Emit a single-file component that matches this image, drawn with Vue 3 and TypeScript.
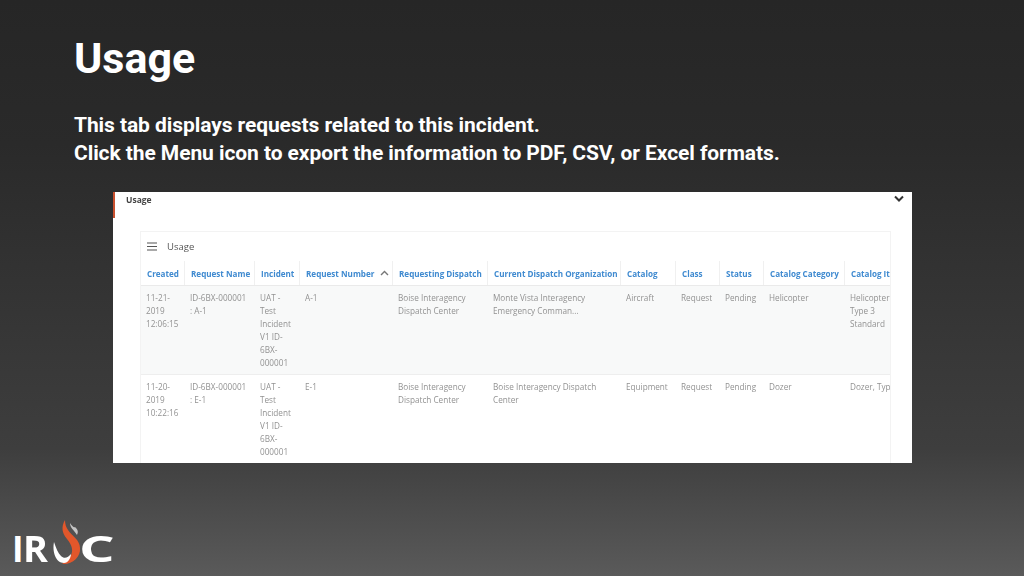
<script setup lang="ts">
interface Row { cells: string[] }
const columns = [
  { label: 'Created', width: 44 }, { label: 'Request Name', width: 70 }, { label: 'Incident', width: 45 },
  { label: 'Request Number', width: 93, sorted: true }, { label: 'Requesting Dispatch', width: 95 },
  { label: 'Current Dispatch Organization', width: 133 }, { label: 'Catalog', width: 55 }, { label: 'Class', width: 44 },
  { label: 'Status', width: 44 }, { label: 'Catalog Category', width: 81 }, { label: 'Catalog Item', width: 46 }
]
const rows: Row[] = [
  { cells: ['11-21-2019 12:06:15', 'ID-6BX-000001 :\u00a0A-1', 'UAT - Test Incident V1 ID-6BX-000001', 'A-1', 'Boise Interagency Dispatch Center', 'Monte Vista Interagency Emergency Comman...', 'Aircraft', 'Request', 'Pending', 'Helicopter', 'Helicopter Type 3 Standard'] },
  { cells: ['11-20-2019 10:22:16', 'ID-6BX-000001 :\u00a0E-1', 'UAT - Test Incident V1 ID-6BX-000001', 'E-1', 'Boise Interagency Dispatch Center', 'Boise Interagency Dispatch Center', 'Equipment', 'Request', 'Pending', 'Dozer', 'Dozer,\u00a0Type'] }
]
const gridColumns = columns.map((c) => `${c.width}px`).join(' ')
</script>

<template>
  <div class="slide">
    <h1 class="title">Usage</h1>
    <p class="intro">This tab displays requests related to this incident.<br />Click the Menu icon to export the information to PDF, CSV, or Excel formats.</p>
    <div class="shot">
      <div class="shot-head">
        <span class="shot-title">Usage</span>
        <svg class="chev" width="12" height="8" viewBox="0 0 12 8"><path d="M2 1.5 6 5.5 10 1.5" fill="none" stroke="#333" stroke-width="2" /></svg>
      </div>
      <div class="card">
        <div class="card-head">
          <svg width="10" height="9" viewBox="0 0 10 9"><path d="M0 1h10M0 4.5h10M0 8h10" stroke="#555" stroke-width="1.2" /></svg>
          <span>Usage</span>
        </div>
        <div class="table">
          <div class="tr th-row" :style="{ gridTemplateColumns: gridColumns }">
            <div v-for="c in columns" :key="c.label" class="th">
              <span class="th-label">{{ c.label }}</span>
              <svg v-if="c.sorted" class="sort" width="9" height="6" viewBox="0 0 9 6"><path d="M1 5 4.5 1.5 8 5" fill="none" stroke="#777" stroke-width="1.4" /></svg>
            </div>
          </div>
          <div v-for="(r, i) in rows" :key="i" class="tr row" :class="{ shaded: i === 0 }" :style="{ gridTemplateColumns: gridColumns }">
            <div v-for="(t, j) in r.cells" :key="j" class="td">{{ t }}</div>
          </div>
        </div>
      </div>
    </div>
    <div class="logo">
      <span class="l-i">I</span>
      <span class="l-r">R</span>
      <svg class="flame" width="37" height="48" viewBox="0 0 37 48">
        <path d="M15 2C11 9 12 15 17 21C22 27 24 33 20 39C18 42 15 44 12 46C22 47 31 39 30 30C30 22 22 18 18 12C16 9 15 6 15 2Z" fill="#e2572b" />
        <path d="M20 5C20 10 24 12 27 17C29 13 27 11 25 9C24 10 22 8 20 5Z" fill="#c4c4c4" />
        <path d="M4 24C2 34 6 45 14 45C18 45 21 40 21 36C18 40 14 41 11 38C8 35 6 30 4 24Z" fill="#fff" />
      </svg>
      <span class="l-c">C</span>
    </div>
  </div>
</template>

<style>
body { margin: 0; }
</style>

<style scoped>
.slide {
  width: 1024px;
  height: 576px;
  box-sizing: border-box;
  overflow: hidden;
  display: flex;
  flex-direction: column;
  padding: 32px 0 0 74px;
  background: linear-gradient(180deg, #262626 0%, #2a2a2a 25%, #3e3e3e 78%, #5a5a5a 100%);
  font-family: Roboto, "Liberation Sans", sans-serif;
  color: #fff;
}
.title {
  margin: 0;
  font-size: 43px;
  line-height: 52px;
  font-weight: 700;
}
.intro {
  margin: 27px 0 0;
  font-size: 21px;
  line-height: 28px;
  font-weight: 700;
  letter-spacing: -0.08px;
}
.shot {
  margin: 25px 0 0 39px;
  width: 799px;
  height: 271px;
  flex: none;
  box-sizing: border-box;
  padding-right: 21px;
  background: linear-gradient(#c9502e, #c9502e) left top / 2px 26px no-repeat, #fff;
  color: #555;
  font-family: "Open Sans", "Noto Sans", sans-serif;
  overflow: hidden;
}
.shot-head {
  height: 39px;
  display: flex;
  align-items: flex-start;
  justify-content: space-between;
  margin-right: -21px;
  padding: 2px 7px 0 13px;
  box-sizing: border-box;
  filter: blur(0.5px);
}
.shot-title {
  font-size: 8.5px;
  line-height: 12px;
  font-weight: 700;
  color: #444;
}
.chev { margin-top: 1px; }
.card {
  margin-left: 27px;
  border: 1px solid #f3f3f3;
  border-bottom: 0;
  height: 232px;
  overflow: hidden;
  filter: blur(0.55px);
}
.card-head {
  height: 29px;
  display: flex;
  align-items: center;
  gap: 10px;
  padding-left: 6px;
  font-size: 9.5px;
  color: #555;
}
.tr { display: grid; }
.th-row {
  height: 24px;
  align-items: stretch;
  border-bottom: 1px solid #eaeaea;
}
.th {
  display: flex;
  align-items: center;
  gap: 6px;
  padding-left: 6px;
  white-space: nowrap;
  overflow: hidden;
  border-right: 1px solid #f0f0f0;
  font-size: 8.1px;
  font-weight: 700;
  color: #3f8ad0;
}
.th:last-child { border-right: 0; }
.row {
  height: 89px;
  border-bottom: 1px solid #eeeeee;
  box-sizing: border-box;
}
.shaded { background: #f8f9f9; }
.td {
  padding: 5px 3px 0 5px;
  font-size: 8.2px;
  line-height: 13px;
  color: #929292;
  overflow: hidden;
}
.logo {
  margin: auto 0 10px -62px;
  height: 48px;
  display: flex;
  align-items: flex-end;
  font-family: "Open Sans", "Noto Sans", sans-serif;
  font-size: 35px;
  line-height: 30px;
  font-weight: 700;
  color: #fff;
}
.l-i, .l-r, .l-c { display: block; margin-bottom: 2px; }
.l-i { width: 11px; }
.l-r { width: 27px; transform: scaleX(1.08); transform-origin: left center; }
.flame { margin-right: -8px; flex: none; }
.l-c { transform: scaleX(1.6); transform-origin: left center; }
</style>
